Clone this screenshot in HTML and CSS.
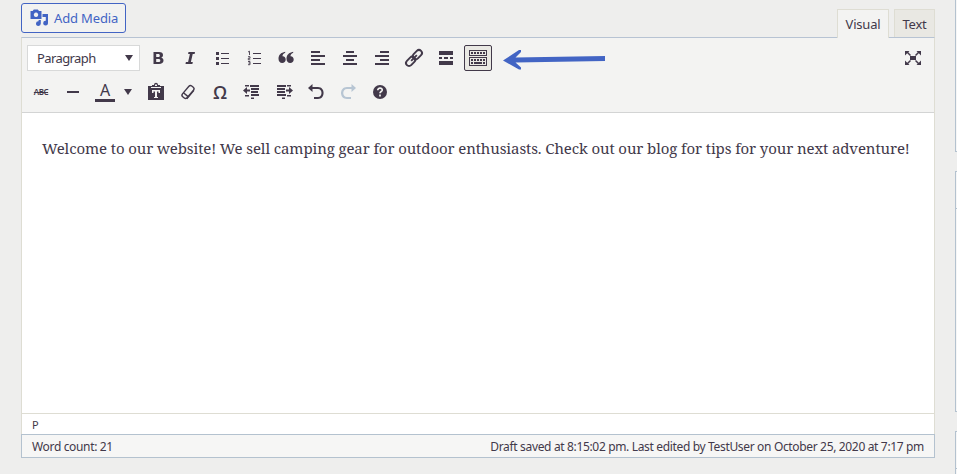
FILE: index.html
```html
<!DOCTYPE html>
<html lang="en">
<head>
<meta charset="utf-8">
<title>Edit Page</title>
<link rel="stylesheet" href="styles.css">
</head>
<body>
<div class="page">
<main class="main">
  <div class="tools">
    <button class="add-media">
      <svg width="20" height="20" viewBox="0 0 20 20"><path fill-rule="evenodd" d="M1.500 3h2.200l1.100-1.500h4L10 3h2.500v8H1.500zM7 4.600a2.200 2.200 0 1 0 .01 0z"/><path d="M13.500 6H19v9a2.400 2.400 0 1 1-2.200-2.300V9h-3.300zM11.800 12v3.600a2.400 2.400 0 1 1-2.200-2.400V12z"/></svg>
      <span>Add Media</span>
    </button>
    <div class="tabs"><button class="tab active"><span>Visual</span></button><button class="tab"><span>Text</span></button></div>
  </div>
  <section class="editor">
    <div class="toolbar">
      <div class="row">
        <div class="select"><span>Paragraph</span><i class="caret"></i></div>
        <button class="btn"><svg viewBox="0 0 20 20"><path fill-rule="evenodd" d="M5.500 4h5.500c2.800 0 4 1.300 4 3.100 0 1.300-.7 2.200-1.800 2.600 1.500.3 2.300 1.300 2.300 2.800 0 2.300-1.700 3.500-4.500 3.500H5.500zM8.200 6v3h1.900c1.200 0 1.700-.5 1.700-1.500S11.300 6 10.100 6zM8.200 11v3h2.200c1.300 0 1.900-.5 1.900-1.500S11.700 11 10.400 11z"/></svg></button>
        <button class="btn"><svg viewBox="0 0 20 20"><path d="M8.500 4H15l-.4 2h-1.900l-1.800 8h1.900l-.4 2H5.500l.4-2h2.200l1.800-8H8.100z"/></svg></button>
        <button class="btn"><svg viewBox="0 0 20 20"><path d="M4 4h3v3H4zM4 9h3v3H4zM4 14h3v3H4zM9 5h8v1H9zM9 10h8v1H9zM9 15h8v1H9z"/></svg></button>
        <button class="btn"><svg viewBox="0 0 20 20"><path d="M9 5h8v1H9zM9 10h8v1H9zM9 15h8v1H9z"/><path class="thin" d="M4 4l1.500-.8V7M4 8.700h2v1.600H4.300v1.500h2M4 13.500h2v3.200H4M4.500 15H6"/></svg></button>
        <button class="btn"><svg viewBox="0 0 20 20"><path d="M9.200 4.700C7.200 5.400 6.500 6.800 6.500 8.200c1.800-.2 3.200 1.200 3.200 3.200 0 2.100-1.500 3.600-3.500 3.600-2.300 0-3.700-1.700-3.700-4.300 0-3.700 2.300-6.200 6.700-7zM17.200 4.700c-2 .7-2.700 2.100-2.700 3.500 1.800-.2 3.200 1.200 3.200 3.200 0 2.100-1.500 3.600-3.500 3.600-2.300 0-3.700-1.700-3.700-4.300 0-3.700 2.300-6.200 6.700-7z"/></svg></button>
        <button class="btn"><svg viewBox="0 0 20 20"><path d="M3 3h9v2H3zM3 7h14v2H3zM3 11h9v2H3zM3 15h14v2H3z"/></svg></button>
        <button class="btn"><svg viewBox="0 0 20 20"><path d="M6 3h8v2H6zM3 7h14v2H3zM6 11h8v2H6zM3 15h14v2H3z"/></svg></button>
        <button class="btn"><svg viewBox="0 0 20 20"><path d="M8 3h9v2H8zM3 7h14v2H3zM8 11h9v2H8zM3 15h14v2H3z"/></svg></button>
        <button class="btn"><svg viewBox="0 0 20 20"><g class="line link" transform="rotate(-45 10 10)"><rect x="0" y="7" width="10.500" height="6" rx="3"/><rect x="9.500" y="7" width="10.500" height="6" rx="3"/><path d="M6 10h8"/></g></svg></button>
        <button class="btn"><svg viewBox="0 0 20 20"><path d="M3 3h14v4H3zM3 9h3v2H3zM8 9h4v2H8zM14 9h3v2h-3zM3 13h14v4H3z"/></svg></button>
        <button class="btn pressed"><svg viewBox="0 0 20 20"><path fill-rule="evenodd" d="M1 2h18v6H1zM2 3v4h16V3zM1 9h18v9H1zM2 10v7h16v-7z"/><path class="keys" d="M3 5h14M3 12h14"/><path d="M3 14h2v2H3zM6 14h8v2H6zM15 14h2v2h-2z"/></svg></button>
        <svg class="arrow" width="104" height="24" viewBox="0 0 104 24"><path d="M1 14.500L17 4h2v2l-5.500 5.500L103 10v5l-89.500 1.500 5.500 5v2h-2z"/></svg>
        <button class="btn fullscreen"><svg viewBox="0 0 20 20"><path d="M7 8h6v4H7zM2 3h4.500L5.300 4.200 8 7 7 8 4.200 5.300 2 7.500zM18 3h-4.500l1.200 1.200L12 7l1 1 2.800-2.700L18 7.500zM2 17h4.500l-1.200-1.200L8 13l-1-1-2.800 2.700L2 12.500zM18 17h-4.500l1.200-1.200L12 13l1-1 2.800 2.700 2.200-2.200z"/></svg></button>
      </div>
      <div class="row second">
        <button class="btn strike"><span>ABC</span></button>
        <button class="btn"><svg viewBox="0 0 20 20"><path d="M4 9h12v2H4z"/></svg></button>
        <button class="btn color"><span>A</span></button>
        <button class="drop"><i class="caret"></i></button>
        <button class="btn"><svg viewBox="0 0 20 20"><path fill-rule="evenodd" d="M2 4h4V3h2c0-3 4-3 4 0h2v1h4v14H2zM9 2.500h2V4H9zM5 5v1h10V5zM6 8v3h1.500V9.500H9V15H8v1h4v-1h-1V9.500h1.500V11H14V8z"/></svg></button>
        <button class="btn"><svg viewBox="0 0 20 20"><g class="line eraser" transform="rotate(-50 10 10)"><rect x="3" y="7" width="14" height="6" rx="2"/><path d="M6.500 7v6M4 13.500h11"/></g></svg></button>
        <button class="btn omega"><span>Ω</span></button>
        <button class="btn"><svg viewBox="0 0 20 20"><path d="M3 3h4v1.500H3zM8 3h9v2H8zM9 6h8v2H9zM9 9h7v2H9zM9 12h8v2H9zM3 13h4v1.500H3zM9 15.500h3V17H9zM1 8.500L5 5v2.500h3v2H5V12z"/></svg></button>
        <button class="btn"><svg viewBox="0 0 20 20"><path d="M3 3h9v2H3zM3 6h8v2H3zM3 9h8v2H3zM3 12h9v2H3zM8 15.500h3V17H8zM13 3h4v1.500h-4zM13 13h4v1.500h-4zM19 8.500L15 5v2.500h-3v2h3V12z"/></svg></button>
        <button class="btn"><svg viewBox="0 0 20 20"><path d="M2 6l4.500-4v3H12c7.500 0 7.500 12 0 12H8v-2h4c4.700 0 4.700-8 0-8H6.500v3z"/></svg></button>
        <button class="btn disabled"><svg viewBox="0 0 20 20"><path d="M18 6l-4.500-4v3H9C1 5 1 17 9 17h4v-2H9C4 15 4 7 9 7h4.500v3z"/></svg></button>
        <button class="btn"><svg viewBox="0 0 20 20"><circle cx="10" cy="10" r="7"/><path class="question" d="M7.800 8.200c0-3 4.700-2.600 4.400 0-.2 1.300-2.200 1.300-2.200 3M10 12.500v2"/></svg></button>
      </div>
    </div>
    <div class="content"><p>Welcome to our website! We sell camping gear for outdoor enthusiasts. Check out our blog for tips for your next adventure!</p></div>
    <div class="path"><span>P</span></div>
    <div class="status"><span class="count">Word count: 21</span><span class="saved">Draft saved at 8:15:02 pm. Last edited by TestUser on October 25, 2020 at 7:17 pm</span></div>
  </section>
</main>
<aside class="side"><div class="panel one"></div><div class="panel two"></div><div class="panel three"></div></aside>
</div>
</body>
</html>
```
FILE: styles.css
```css
* { box-sizing: border-box; }
body { margin: 0; background: #eeeeed; color: #42394a; font: 13px/20px "Noto Sans", sans-serif; overflow: hidden; }
button { padding: 0; margin: 0; border: 0; background: none; color: inherit; font: inherit; }
svg { fill: currentColor; display: block; }
.page { display: flex; height: 474px; }
.main { width: 914px; margin-left: 21px; }
.tools { display: flex; justify-content: space-between; height: 37px; padding-top: 3px; }
.add-media { display: flex; align-items: center; gap: 5px; width: 105px; height: 30px; padding-left: 7px; border: 1px solid #4264c4; border-radius: 3px; color: #4264c4; background: #f2f2f1; white-space: nowrap; }
.add-media span { letter-spacing: -.15px; }
.tabs { display: flex; gap: 5px; padding-top: 6px; }
.tab { width: 41px; height: 28px; border: 1px solid #deddd3; border-bottom: 0; background: #e9e8e3; letter-spacing: -.2px; }
.tab.active { width: 52px; height: 29px; background: #f3f3f2; z-index: 1; }
.editor { border: 1px solid #deddd3; border-top-color: #b7c3d3; border-bottom: 0; height: 421px; display: flex; flex-direction: column; background: #fff; }
.toolbar { height: 75px; flex: none; background: #f3f3f2; border-bottom: 1px solid #d3d4d4; padding: 6px 5px 0; }
.row { display: flex; gap: 4px; height: 28px; align-items: center; }
.second { margin-top: 6px; }
.select { width: 113px; height: 26px; border: 1px solid #d8d9d9; background: #fff; display: flex; align-items: center; justify-content: space-between; padding: 0 6px 0 9px; letter-spacing: -.6px; }
.caret { border: 4.500px solid transparent; border-top: 6px solid; border-bottom: 0; }
.btn { width: 28px; height: 28px; display: flex; align-items: center; justify-content: center; flex: none; }
.btn svg { width: 20px; height: 20px; overflow: visible; }
.pressed { height: 26px; border: 1px solid #42394a; border-radius: 2px; background: #e9e8e3; }
.thin { fill: none; stroke: currentColor; stroke-width: .9; }
.line { fill: none; stroke: currentColor; stroke-width: 1.600; }
.link { stroke-width: 1.900; }
.eraser { stroke-width: 1.400; }
.keys { fill: none; stroke: currentColor; stroke-width: 2; stroke-dasharray: 2 1; }
.question { fill: none; stroke: #f3f3f2; stroke-width: 1.700; }
.arrow { fill: #4264c4; margin-left: 6px; }
.fullscreen { margin-left: auto; margin-right: 2px; }
.strike span { font-size: 8px; line-height: 10px; font-weight: 600; letter-spacing: -.5px; text-decoration: line-through; }
.color span { width: 20px; height: 20px; border-bottom: 3px solid; font-size: 16px; line-height: 17px; text-align: center; }
.drop { width: 15px; height: 28px; padding-right: 6px; display: flex; align-items: center; justify-content: center; }
.omega span { font: 600 18px/20px "Open Sans", sans-serif; }
.disabled { color: #b7c5d3; }
.content { height: 300px; padding: 21px 20px 0; flex: none; }
.content p { margin: 0; font: 15px/28px "Noto Serif", "Liberation Serif", serif; letter-spacing: -.11px; white-space: nowrap; }
.path { height: 21px; flex: none; border-top: 1px solid #deddd3; padding-left: 10px; font-size: 11px; line-height: 21px; }
.status { height: 24px; flex: none; margin: 0 -1px; border: 1px solid #b4c2cf; background: #f6f6f5; display: flex; justify-content: space-between; align-items: center; padding: 1px 10px 0; font-size: 12px; letter-spacing: -.34px; white-space: nowrap; }
.side { width: 2px; margin-left: 20px; }
.panel { border: 1px solid #b4c2cf; border-right: 0; background: #f6f6f6; }
.one { height: 152px; border-top: 0; }
.two { height: 241px; margin-top: 19px; padding-top: 36px; }
.two::before, .three::before { content: ""; display: block; height: 1px; background: #b4c2cf; }
.three { height: 43px; margin-top: 19px; padding-top: 36px; border-bottom: 0; }
```
